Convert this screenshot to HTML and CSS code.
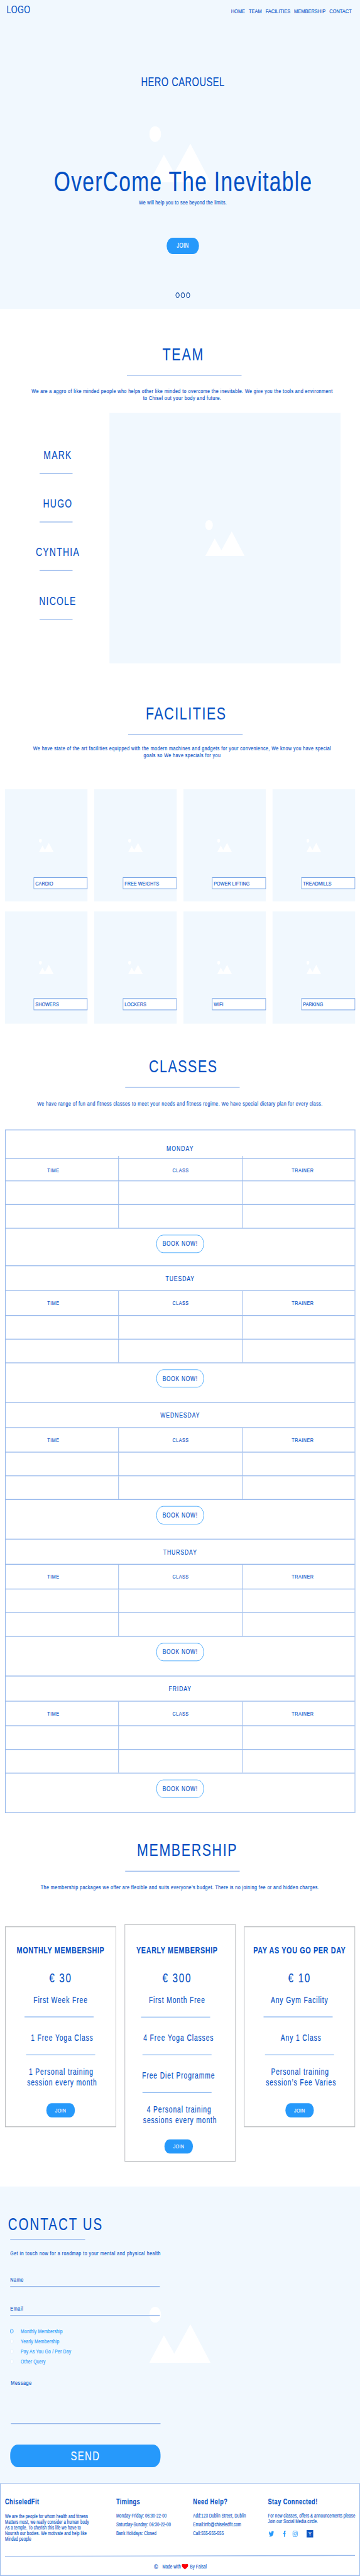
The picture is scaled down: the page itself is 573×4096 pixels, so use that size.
FILE: index.html
```html
<!DOCTYPE html>
<html lang="en">
<head>
<meta charset="utf-8">
<title>ChiseledFit</title>
<link rel="stylesheet" href="styles.css">
</head>
<body>
<svg class="defs" width="0" height="0" aria-hidden="true">
  <symbol id="art" viewBox="0 0 97.6 66.8">
    <circle cx="9.4" cy="9.4" r="9.4"/>
    <polygon points="0,66.8 23.4,34 39.9,55.8 65.5,20.9 97.6,66.8"/>
  </symbol>
</svg>
<div class="frame">
<div class="page">
  <section class="hero">
    <svg class="art hero-art"><use href="#art"/></svg>
    <header class="topbar">
      <div class="logo">LOGO</div>
      <nav class="nav"><a>HOME</a><a>TEAM</a><a>FACILITIES</a><a>MEMBERSHIP</a><a>CONTACT</a></nav>
    </header>
    <div class="hero-body">
      <div class="hero-label">HERO CAROUSEL</div>
      <h1>OverCome The Inevitable</h1>
      <p class="hero-sub">We will help you to see beyond the limits.</p>
      <a class="btn btn-hero">JOIN</a>
      <div class="dots"><i></i><i></i><i></i></div>
    </div>
  </section>

  <section class="team">
    <h2>TEAM</h2>
    <div class="rule"></div>
    <p class="lead">We are a aggro of like minded people who helps other like minded to overcome the inevitable. We give you the tools and environment<br>to Chisel out your body and future.</p>
    <div class="team-body">
      <ul class="names"><li>MARK</li><li>HUGO</li><li>CYNTHIA</li><li>NICOLE</li></ul>
      <div class="team-photo"><svg class="art"><use href="#art"/></svg></div>
    </div>
  </section>

  <section class="facilities">
    <h2>FACILITIES</h2>
    <div class="rule"></div>
    <p class="lead">We have state of the art facilities equipped with the modern machines and gadgets for your convenience, We know you have special<br>goals so We have specials for you</p>
    <div class="tiles">
      <div class="tile"><svg class="art"><use href="#art"/></svg><span>CARDIO</span></div>
      <div class="tile"><svg class="art"><use href="#art"/></svg><span>FREE WEIGHTS</span></div>
      <div class="tile"><svg class="art"><use href="#art"/></svg><span>POWER LIFTING</span></div>
      <div class="tile"><svg class="art"><use href="#art"/></svg><span>TREADMILLS</span></div>
      <div class="tile low"><svg class="art"><use href="#art"/></svg><span>SHOWERS</span></div>
      <div class="tile low"><svg class="art"><use href="#art"/></svg><span>LOCKERS</span></div>
      <div class="tile low"><svg class="art"><use href="#art"/></svg><span>WIFI</span></div>
      <div class="tile low"><svg class="art"><use href="#art"/></svg><span>PARKING</span></div>
    </div>
  </section>

  <section class="classes">
    <h2>CLASSES</h2>
    <div class="rule"></div>
    <p class="lead">We have range of fun and fitness classes to meet your needs and fitness regime. We have special dietary plan for every class.</p>
    <div class="schedule">
      <div class="day first">
        <div class="day-name">MONDAY</div>
        <div class="cells head"><span>TIME</span><span>CLASS</span><span>TRAINER</span></div>
        <div class="cells"><span></span><span></span><span></span></div>
        <div class="cells"><span></span><span></span><span></span></div>
        <div class="book"><a>BOOK NOW!</a></div>
      </div>
      <div class="day">
        <div class="day-name">TUESDAY</div>
        <div class="cells head"><span>TIME</span><span>CLASS</span><span>TRAINER</span></div>
        <div class="cells"><span></span><span></span><span></span></div>
        <div class="cells"><span></span><span></span><span></span></div>
        <div class="book"><a>BOOK NOW!</a></div>
      </div>
      <div class="day">
        <div class="day-name">WEDNESDAY</div>
        <div class="cells head"><span>TIME</span><span>CLASS</span><span>TRAINER</span></div>
        <div class="cells"><span></span><span></span><span></span></div>
        <div class="cells"><span></span><span></span><span></span></div>
        <div class="book"><a>BOOK NOW!</a></div>
      </div>
      <div class="day">
        <div class="day-name">THURSDAY</div>
        <div class="cells head"><span>TIME</span><span>CLASS</span><span>TRAINER</span></div>
        <div class="cells"><span></span><span></span><span></span></div>
        <div class="cells"><span></span><span></span><span></span></div>
        <div class="book"><a>BOOK NOW!</a></div>
      </div>
      <div class="day">
        <div class="day-name">FRIDAY</div>
        <div class="cells head"><span>TIME</span><span>CLASS</span><span>TRAINER</span></div>
        <div class="cells"><span></span><span></span><span></span></div>
        <div class="cells"><span></span><span></span><span></span></div>
        <div class="book"><a>BOOK NOW!</a></div>
      </div>
    </div>
  </section>

  <section class="membership">
    <h2>MEMBERSHIP</h2>
    <div class="rule"></div>
    <p class="lead">The membership packages we offer are flexible and suits everyone’s budget. There is no joining fee or and hidden charges.</p>
    <div class="plans">
      <div class="plan">
        <h3>MONTHLY MEMBERSHIP</h3>
        <div class="price">€ 30</div>
        <div class="perk">First Week Free</div>
        <div class="sep"></div>
        <div class="perk second">1 Free Yoga Class</div>
        <div class="sep mid"></div>
        <div class="perk last"><span>1 Personal training</span><br>session every month</div>
        <a class="btn btn-plan">JOIN</a>
      </div>
      <div class="plan featured">
        <h3>YEARLY MEMBERSHIP</h3>
        <div class="price">€ 300</div>
        <div class="perk">First Month Free</div>
        <div class="sep"></div>
        <div class="perk second">4 Free Yoga Classes</div>
        <div class="sep mid"></div>
        <div class="perk second">Free Diet Programme</div>
        <div class="sep mid"></div>
        <div class="perk last"><span>4 Personal training</span><br>sessions every month</div>
        <a class="btn btn-plan">JOIN</a>
      </div>
      <div class="plan">
        <h3>PAY AS YOU GO PER DAY</h3>
        <div class="price">€ 10</div>
        <div class="perk">Any Gym Facility</div>
        <div class="sep"></div>
        <div class="perk second">Any 1 Class</div>
        <div class="sep mid"></div>
        <div class="perk last"><span>Personal training</span><br>session’s Fee Varies</div>
        <a class="btn btn-plan">JOIN</a>
      </div>
    </div>
  </section>

  <section class="contact">
    <svg class="art contact-art"><use href="#art"/></svg>
    <div class="form">
      <h2>CONTACT US</h2>
      <div class="rule short"></div>
      <p>Get in touch now for a roadmap to your mental and physical health</p>
      <div class="field name">Name</div>
      <div class="field email">Email</div>
      <ul class="radios">
        <li><i class="on"></i>Monthly Membership</li>
        <li><i></i>Yearly Membership</li>
        <li><i></i>Pay As You Go / Per Day</li>
        <li><i></i>Other Query</li>
      </ul>
      <div class="field message">Message</div>
      <a class="btn btn-send">SEND</a>
    </div>
  </section>

  <footer class="footer">
    <div class="cols">
      <div class="about">
        <h4>ChiseledFit</h4>
        <p>We are the people for whom health and fitness<br>Matters most, we really consider a human body<br>As a temple. To cherish this life we have to<br>Nourish our bodies. We motivate and help like<br>Minded people</p>
      </div>
      <div class="list">
        <h4>Timings</h4>
        <p>Monday-Friday: 06:30-22-00</p>
        <p>Saturday-Sunday: 06:30-22-00</p>
        <p>Bank Holidays: Closed</p>
      </div>
      <div class="list">
        <h4>Need Help?</h4>
        <p>Add:123 Dublin Street, Dublin</p>
        <p>Email:info@chiseledfit.com</p>
        <p>Call:555-555-555</p>
      </div>
      <div class="social">
        <h4>Stay Connected!</h4>
        <p>For new classes, offers &amp; announcements please<br>Join our Social Media circle.</p>
        <div class="icons">
          <svg class="tw" viewBox="0 2 24 20"><path d="M24 4.6a10 10 0 0 1-2.8.8 5 5 0 0 0 2.1-2.7 10 10 0 0 1-3.1 1.2 4.9 4.9 0 0 0-8.4 4.5A14 14 0 0 1 1.7 3.2a4.9 4.9 0 0 0 1.5 6.5 5 5 0 0 1-2.2-.6v.1a4.9 4.9 0 0 0 3.9 4.8 5 5 0 0 1-2.2.1 4.9 4.9 0 0 0 4.6 3.4A9.9 9.9 0 0 1 0 19.5 14 14 0 0 0 7.5 21.7c9.1 0 14-7.5 14-14v-.6A10 10 0 0 0 24 4.6z"/></svg>
          <svg class="fb" viewBox="6 0 12 24"><path d="M14.6 24V13.5h3l.5-4.2h-3.5V6.8c0-1.3.4-2 2-2H18V.3A24 24 0 0 0 15.2 0C12 0 10 2 10 5.6v3.7H6.5v4.2H10V24z"/></svg>
          <svg class="ig" viewBox="0 0 24 24"><rect x="1.3" y="1.3" width="21.4" height="21.4" rx="6"/><circle cx="12" cy="12" r="5.2"/><circle class="lens" cx="18" cy="6" r="1.5"/></svg>
          <span class="yc">Y</span>
        </div>
      </div>
    </div>
    <div class="foot-rule"></div>
    <div class="credit">
      <span class="copy">©</span><span>Made with</span>
      <svg class="heart" viewBox="0 0 24 16" preserveAspectRatio="none"><path d="M12 16C7 12.5 0 9.5 0 4.3 0-.9 9-1.5 12 2.3 15-1.5 24-.9 24 4.3 24 9.5 17 12.5 12 16z"/></svg>
      <span>By Faisal</span>
    </div>
  </footer>
</div>
</div>
</body>
</html>
```
FILE: styles.css
```css
:root {
  --ink: #0450c4;
  --soft: #f1f8fe;
  --accent: #2699fb;
  --line: #98b9ec;
}
* { box-sizing: border-box; margin: 0; padding: 0; }
html { background: #fff; }
.defs { position: absolute; }
.frame { width: 573px; height: 4096px; overflow: hidden; contain: strict; }

/* The layout is drawn at 573 x 3072 and stretched to a 3:4 tall ratio.
   The zoom keeps fractional sizes precise before the final scale. */
.page {
  width: 573px;
  height: 3072px;
  zoom: 4;
  transform: scale(.25, .333333);
  transform-origin: 0 0;
  background: #fff;
  color: var(--ink);
  font-family: "Liberation Sans", Arial, sans-serif;
  -webkit-text-stroke: .1px;
  white-space: nowrap;
}
.art { fill: #fff; display: block; }
ul { list-style: none; }
i { display: block; }

.btn {
  display: flex;
  align-items: center;
  justify-content: center;
  background: var(--accent);
  color: #fff;
}

/* Hero */
.hero { position: relative; height: 368.6px; background: var(--soft); }
.hero-art { position: absolute; left: 237.5px; top: 150.6px; width: 97.6px; height: 66.8px; }
.topbar { position: relative; display: flex; justify-content: space-between; height: 24px; padding: 0 13.2px 0 10.5px; }
.logo { font-size: 12.7px; line-height: 22.8px; letter-spacing: .3px; }
.nav { display: flex; gap: 5.9px; font-size: 7.4px; line-height: 26.2px; letter-spacing: .05px; }
.hero-body { position: relative; display: flex; flex-direction: column; align-items: center; padding-left: 9px; }
.hero-label { margin-top: 65.9px; font-size: 14.7px; line-height: 16px; letter-spacing: .43px; }
h1 { margin-top: 91.9px; font-size: 33.5px; line-height: 38px; font-weight: 400; letter-spacing: 1.335px; text-indent: 1.3px; }
.hero-sub { margin-top: .7px; font-size: 7.1px; line-height: 10px; letter-spacing: .25px; }
.btn-hero { margin-top: 37px; width: 51.5px; height: 19.5px; border-radius: 9.7px; font-size: 7.9px; letter-spacing: .33px; }
.dots { display: flex; gap: 2px; margin-top: 45.8px; }
.dots i { width: 6.4px; height: 6.4px; border: 1.1px solid #07429c; border-radius: 50%; }

/* Shared section heading */
h2 { font-size: 21.4px; line-height: 24px; font-weight: 400; text-align: center; letter-spacing: 1.55px; text-indent: 1.6px; padding-left: 9px; }
.rule { width: 182.4px; height: 1px; margin-top: 12.7px; background: var(--line); }
.lead { font-size: 7.15px; line-height: 8.2px; letter-spacing: .44px; text-align: center; margin-top: 14.6px; }

/* Team */
.team { height: 442.4px; padding-top: 41.7px; }
.team h2 { letter-spacing: 1.85px; }
.team .rule { margin-left: 202.1px; }
.team .lead { padding-left: 7px; }
.team-body { display: flex; margin-top: 13.4px; }
.names { width: 174.3px; padding: 42px 0 0 62.9px; }
.names li {
  display: flex;
  justify-content: center;
  width: 52.6px;
  height: 30.7px;
  margin-bottom: 27.3px;
  padding-left: 5.5px;
  border-bottom: 1px solid var(--line);
  font-size: 14px;
  line-height: 16px;
  letter-spacing: 1.22px;
}
.team-photo { display: grid; place-items: center; width: 367.6px; height: 298.7px; background: var(--soft); }
.team-photo .art { width: 63.2px; height: 43px; }

/* Facilities */
.facilities { height: 417.8px; padding-top: 27.8px; }
.facilities h2 { padding-left: 18px; }
.facilities .rule { margin-left: 203.9px; }
.facilities .lead { margin-top: 11.7px; padding-left: 7px; }
.tiles { display: grid; grid-template-columns: repeat(4, 131.3px); grid-auto-rows: 133.8px; gap: 11.8px 10.65px; margin: 36.7px 0 0 8px; }
.tile { display: grid; background: var(--soft); }
.tile .art { grid-area: 1 / 1; place-self: center; width: 23.4px; height: 16px; }
.tile span {
  grid-area: 1 / 1;
  place-self: end;
  width: 85.7px;
  height: 14.1px;
  margin-bottom: 14.8px;
  padding-left: 2px;
  border: .75px solid #6f9fe4;
  background: #fff;
  font-size: 7.2px;
  line-height: 12.8px;
  letter-spacing: .03px;
}
.tile.low span { margin-bottom: 16px; }

/* Classes */
.classes { height: 958.5px; padding-top: 30.8px; }
.classes .rule, .membership .rule { margin-left: 199.2px; }
.schedule { width: 557.5px; margin: 27px 0 0 8px; border: 1px solid #98b9ec; border-bottom: 0; }
.day-name { height: 29.95px; border-bottom: 1px solid var(--line); font-size: 8.6px; line-height: 29.5px; letter-spacing: .93px; text-align: center; }
.cells { display: grid; grid-template-columns: 179.3px 197.4px 1fr; height: 28.25px; border-bottom: 1px solid var(--line); }
.cells span + span { border-left: 1px solid var(--line); }
.head { height: 29.4px; font-size: 7.1px; line-height: 28.8px; letter-spacing: .55px; text-align: center; }
.head span:first-child { padding-right: 27.5px; }
.head span:last-child { padding-left: 12.5px; }
.book { height: 47.25px; padding-top: 7.2px; border-bottom: 1px solid var(--line); }
.book a {
  display: flex;
  align-items: center;
  justify-content: center;
  width: 76px;
  height: 21.9px;
  margin: 0 auto;
  border: .9px solid #3fa4fb;
  border-radius: 11px;
  font-size: 8.4px;
  letter-spacing: .75px;
}
.first .day-name { height: 34px; line-height: 42.5px; letter-spacing: 1.05px; }
.first .head { height: 26.6px; line-height: 26.6px; }
.first .head span + span { margin-top: -3.5px; padding-top: 3.5px; }
.first .book { height: 44.7px; }

/* Membership */
.membership { height: 420.2px; padding-top: 6.9px; }
.membership h2 { padding-left: 21.6px; letter-spacing: 1.62px; }
.plans { display: flex; align-items: flex-start; gap: 13.15px; margin: 39.9px 0 0 8px; }
.plan { display: flex; flex-direction: column; align-items: center; width: 177px; height: 239.6px; margin-top: 2.6px; padding-top: 20.6px; border: 1px solid #bdbfc2; text-align: center; }
.featured { height: 283.5px; margin-top: 0; padding: 23.2px 9.6px 0 0; }
h3 { font-size: 10.8px; line-height: 14px; letter-spacing: .64px; }
.price { margin-top: 17.3px; font-size: 15.3px; line-height: 18px; letter-spacing: 1.7px; }
.perk { margin-top: 11.1px; font-size: 10.3px; line-height: 12.4px; letter-spacing: .9px; }
.sep { width: 110px; height: 1px; margin: 13.3px 4.8px 0 0; background: #8fbaf1; }
.sep.mid { margin-right: 0; }
.perk.second { margin: 18.4px 0 0 4.8px; }
.perk.last { margin: 13.8px 0 0 4.8px; }
.perk.last span { padding-right: 3px; }
.featured .perk.last { margin-left: 9.6px; }
.btn-plan { width: 45.3px; height: 16.9px; margin-top: 18.6px; border-radius: 8.4px; font-size: 7.2px; letter-spacing: .24px; }
.featured .btn-plan { margin: 16.7px 0 0 5.2px; }

/* Contact */
.contact { position: relative; height: 353.7px; background: var(--soft); }
.contact-art { position: absolute; left: 237.5px; top: 143.6px; width: 97.6px; height: 66.8px; }
.form { position: relative; width: 255.4px; padding: 33px 0 0 16.3px; }
.form h2 { margin-left: -3.5px; padding: 0; text-indent: 0; text-align: left; font-size: 20.5px; letter-spacing: 2px; }
.rule.short { width: 119.2px; margin-top: 5.6px; }
.contact .rule.short { margin-left: 0; }
.form p { margin-top: 11.5px; font-size: 6.9px; line-height: 10px; letter-spacing: .56px; }
.field { width: 238.3px; border-bottom: 1px solid var(--line); font-size: 7.2px; line-height: 10px; letter-spacing: .62px; }
.name { height: 13.7px; margin-top: 20.9px; }
.email { height: 13.5px; margin-top: 21px; }
.radios { margin-top: 12.3px; }
.radios li { display: flex; align-items: center; gap: 11.5px; height: 12.05px; color: var(--accent); font-size: 6.8px; letter-spacing: .2px; }
.radios i { width: 5.7px; height: 5.7px; margin-left: -.4px; border: .9px solid #e4effb; border-radius: 50%; background: #fff; }
.radios i.on { border-color: var(--accent); background: transparent; }
.message { height: 54.4px; margin: 14.2px 0 0 1px; }
.btn-send { width: 239.1px; height: 27px; margin-top: 24.5px; border-radius: 12px; font-size: 14.9px; letter-spacing: 1.36px; }

/* Footer */
.footer { height: 110.8px; padding: 0 7px; border: 1px solid #98b9ec; }
.cols { display: grid; grid-template-columns: 176.9px 122.4px 119.2px 1fr; padding-top: 15.5px; }
h4 { font-size: 9.2px; line-height: 12px; letter-spacing: .44px; }
.cols p { font-size: 6.1px; line-height: 6.73px; letter-spacing: .13px; }
.about p { margin-top: 8.2px; }
.list p { margin-top: 3.82px; }
.list h4 + p, .social p { margin-top: 7.3px; }
.icons { display: flex; align-items: center; height: 8.6px; margin-top: 6.9px; fill: var(--accent); }
.tw { width: 8.4px; height: 7px; margin-left: 1.2px; }
.fb { width: 4.8px; height: 7.6px; margin-left: 14.2px; }
.ig { width: 9px; height: 7.9px; margin-left: 10.2px; fill: none; stroke: var(--accent); stroke-width: 2.2; }
.ig .lens { fill: var(--accent); stroke: none; }
.yc { width: 10.3px; height: 8.6px; margin-left: 13.8px; background: #0f56c2; color: #fff; font-size: 7px; line-height: 8.8px; text-align: center; }
.foot-rule { height: 1px; margin-top: 16px; background: var(--line); transform: rotate(-.1deg); }
.credit { display: flex; align-items: center; height: 10px; margin: 7.3px 0 0 237.2px; font-size: 6.2px; letter-spacing: .12px; }
.copy { width: 13.2px; font-size: 8.4px; }
.heart { width: 10.3px; height: 6.6px; margin: 0 2.8px 0 1.6px; fill: #fb0007; }
```
